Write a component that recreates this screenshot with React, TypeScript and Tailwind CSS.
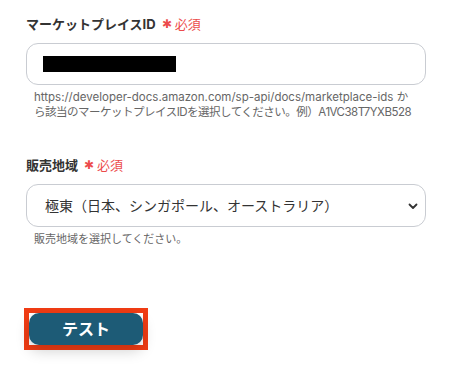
export default function App() {
  return (
    <div
      className="h-[377px] w-[474px] overflow-hidden bg-white pl-[26px] pt-[14px] text-[#333]"
      style={{ fontFamily: 'Inter, "Noto Sans CJK JP", "Noto Sans", sans-serif' }}
    >
      <div className="w-[400px]">
        <div className="flex items-center gap-[6px] text-[13px] font-bold leading-[20px]">
          <span>マーケットプレイスID</span>
          <span className="flex items-center gap-[3px] text-[13px] font-normal text-[#ec4b4b]">
            <span className="text-[12px]">✱</span>
            必須
          </span>
        </div>
        <div className="mt-[9px] flex h-[42px] items-center rounded-[12px] border border-[#c9ccd2] px-[16px]">
          <div className="h-[16px] w-[133px] bg-black" />
        </div>
        <p className="mt-[5px] px-[8px] text-[11.5px] leading-[15px] whitespace-nowrap text-[#666]">
          <span className="block">https://developer-docs.amazon.com/sp-api/docs/marketplace-ids か</span>
          <span className="block tracking-[-0.5px]">ら該当のマーケットプレイスIDを選択してください。例）A1VC38T7YXB528</span>
        </p>

        <div className="mt-[35px] flex items-center gap-[6px] text-[13px] font-bold leading-[20px]">
          <span>販売地域</span>
          <span className="flex items-center gap-[3px] text-[13px] font-normal text-[#ec4b4b]">
            <span className="text-[12px]">✱</span>
            必須
          </span>
        </div>
        <div className="mt-[9px] flex h-[43px] items-center justify-between rounded-[12px] border border-[#c9ccd2] pl-[18px] pr-[6px]">
          <span className="text-[14px] text-[#333]">極東（日本、シンガポール、オーストラリア）</span>
          <svg width="12" height="12" viewBox="0 0 12 12" fill="none">
            <path d="M2.5 4.5 6 8l3.5-3.5" stroke="#333" strokeWidth="1.8" strokeLinecap="round" strokeLinejoin="round" />
          </svg>
        </div>
        <p className="mt-[5px] px-[8px] text-[11px] leading-[15px] text-[#666]">販売地域を選択してください。</p>

        <div className="mt-[61px] ml-[-2px] w-[124px] border-[5px] border-[#f03c14] bg-white">
          <button
            type="button"
            className="flex h-[32px] w-full items-center justify-center rounded-[10px] bg-[#1d5b76] text-[16px] font-bold text-white shadow-[0_6px_14px_rgba(0,0,0,0.18)]"
          >
            テスト
          </button>
        </div>
      </div>
    </div>
  );
}
